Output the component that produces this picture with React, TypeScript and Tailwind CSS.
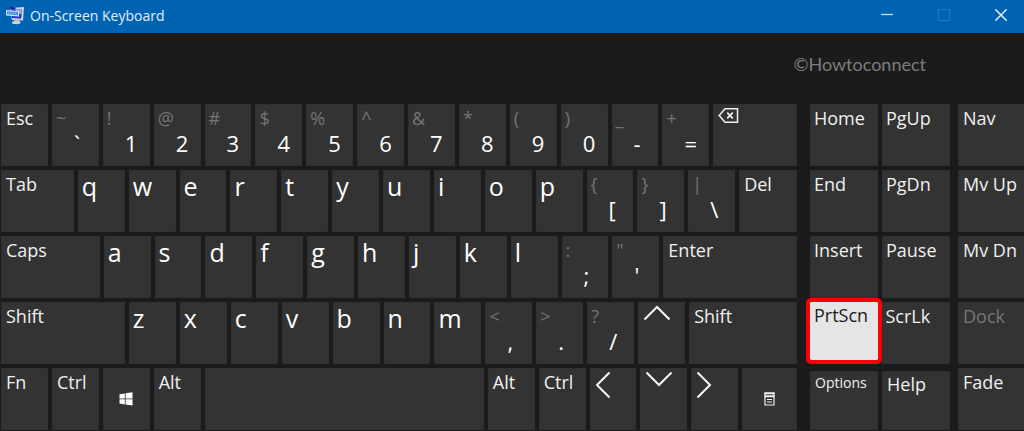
import React from "react";

type KeyDef = {
  id: string;
  label?: string;
  shifted?: string;
  size: string;
  kind?: "letter" | "word" | "pair" | "icon" | "center" | "blank";
  icon?: React.ReactNode;
};

const U = "flex-[47]";

const Backspace = (
  <svg width="22" height="18" viewBox="0 0 22 18" fill="none" stroke="#f0f0f0" strokeWidth="1.5">
    <path d="M7 1.7H19.5V15.3H7L1.2 8.5Z" />
    <path d="M9.2 5.7L14.8 11.3M14.8 5.7L9.2 11.3" strokeWidth="1.7" />
  </svg>
);

const Chevron = ({ d, w, h }: { d: string; w: number; h: number }) => (
  <svg width={w} height={h} viewBox={`0 0 ${w} ${h}`} fill="none" stroke="#f8f8f8" strokeWidth="2">
    <path d={d} />
  </svg>
);

const WindowsLogo = (
  <svg width="14" height="14" viewBox="0 0 14 14" fill="#ffffff">
    <path d="M0.5 2.2L5.8 1.4V6.5H0.5ZM6.6 1.3L13.5 0.3V6.5H6.6ZM0.5 7.3H5.8V12.4L0.5 11.6ZM6.6 7.3H13.5V13.5L6.6 12.5Z" />
  </svg>
);

const MenuIcon = (
  <svg width="11" height="14" viewBox="0 0 11 14" fill="none" stroke="#f0f0f0">
    <path d="M1 0.5V13H10V0.5" strokeWidth="1.2" />
    <path d="M0.5 1.2H10.5M0.5 4.2H10.5" strokeWidth="1.9" />
    <path d="M3 7.5H8M3 10H8" strokeWidth="1.2" />
  </svg>
);

const letters = (s: string): KeyDef[] =>
  s.split("").map((c) => ({ id: c, label: c, size: U, kind: "letter" as const }));

const pairs = (list: [string, string][]): KeyDef[] =>
  list.map(([shifted, label]) => ({ id: label, label, shifted, size: U, kind: "pair" as const }));

const word = (id: string, label: string, size: string = U): KeyDef => ({ id, label, size, kind: "word" });

const icon = (id: string, node: React.ReactNode, size: string = U, kind: KeyDef["kind"] = "icon"): KeyDef => ({
  id,
  icon: node,
  size,
  kind,
});

const rows: KeyDef[][] = [
  [
    word("Escape", "Esc"),
    ...pairs([
      ["~", "`"],
      ["!", "1"],
      ["@", "2"],
      ["#", "3"],
      ["$", "4"],
      ["%", "5"],
      ["^", "6"],
      ["&", "7"],
      ["*", "8"],
      ["(", "9"],
      [")", "0"],
      ["_", "-"],
      ["+", "="],
    ]),
    icon("Backspace", Backspace, "flex-[84]"),
  ],
  [
    word("Tab", "Tab", "flex-[73]"),
    ...letters("qwertyuiop"),
    ...pairs([
      ["{", "["],
      ["}", "]"],
      ["|", "\\"],
    ]),
    word("Delete", "Del", "flex-[58]"),
  ],
  [
    word("Caps Lock", "Caps", "flex-[99]"),
    ...letters("asdfghjkl"),
    ...pairs([
      [":", ";"],
      ['"', "'"],
    ]),
    word("Enter", "Enter", "flex-[134]"),
  ],
  [
    word("Left Shift", "Shift", "flex-[124]"),
    ...letters("zxcvbnm"),
    ...pairs([
      ["<", ","],
      [">", "."],
      ["?", "/"],
    ]),
    icon("Up", <Chevron w={28} h={16} d="M1.5 14.5L14 2L26.5 14.5" />),
    word("Right Shift", "Shift", "flex-[108]"),
  ],
  [
    word("Function", "Fn"),
    word("Left Control", "Ctrl"),
    icon("Windows", WindowsLogo, U, "center"),
    word("Left Alt", "Alt"),
    { id: "Space", size: "flex-[280]", kind: "blank" },
    word("Right Alt", "Alt"),
    word("Right Control", "Ctrl"),
    icon("Left", <Chevron w={16} h={28} d="M14.5 1.5L2 14L14.5 26.5" />),
    icon("Down", <Chevron w={28} h={16} d="M1.5 1.5L14 14L26.5 1.5" />),
    icon("Right", <Chevron w={16} h={28} d="M1.5 1.5L14 14L1.5 26.5" />),
    icon("Menu", MenuIcon, "flex-[55]", "center"),
  ],
];

const keyBase =
  "min-w-0 overflow-hidden whitespace-nowrap border border-[#2f2f2f] bg-[#333333] text-left text-[#f0f0f0]";

function Key({ k }: { k: KeyDef }) {
  const base = `${keyBase} w-full h-[62px] flex flex-col`;
  switch (k.kind) {
    case "letter":
      return (
        <button type="button" className={`${base} items-start pl-[3px] text-[25px] leading-[30px] text-white`}>
          {k.label}
        </button>
      );
    case "pair":
      return (
        <button type="button" className={`${base} items-start pl-[3px]`}>
          <span className="text-lg leading-[26px] text-[#757575]">{k.shifted}</span>
          <span className="pl-[18px] text-[22px] leading-6 text-white">{k.label}</span>
        </button>
      );
    case "icon":
      return (
        <button type="button" aria-label={k.id} className={`${base} items-start pl-1 pt-[2px]`}>
          {k.icon}
        </button>
      );
    case "center":
      return (
        <button type="button" aria-label={k.id} className={`${base} items-center justify-center`}>
          {k.icon}
        </button>
      );
    case "blank":
      return <button type="button" aria-label={k.id} className={base} />;
    default:
      return (
        <button type="button" aria-label={k.id} className={`${base} items-start pl-1 text-lg leading-[26px]`}>
          {k.label}
        </button>
      );
  }
}

const sideKey = `${keyBase} flex h-[62px] flex-1 items-start pl-[3px] text-lg leading-[26px]`;

function AppIcon() {
  return (
    <svg width="20" height="20" viewBox="0 0 20 20" aria-hidden="true">
      <path d="M5 2L19 1L18 14.5L7 14Z" fill="#d3d7e2" />
      <path d="M5 0.8L10.5 1.4V3L5 3.2Z" fill="#1a1fa0" />
      <path d="M6 2.8L17 3.6L16.2 12.8L7 12Z" fill="#2c38c4" />
      <path d="M10 3L16.8 3.6L16.4 8L13 8Z" fill="#93a6ec" />
      <path d="M1 4L14 5V10.4L1 9.4Z" fill="#cfe3fa" />
      <path d="M2 5.2L13 6.1V9.2L2 8.3Z" fill="#3f8cdd" />
      <path d="M3 6.8L12 7.6" stroke="#a9d0f7" strokeWidth="0.8" strokeDasharray="1.4 0.8" />
      <path d="M9.5 13.5H14.5L15 16.5H8.5Z" fill="#b3b5ba" />
      <ellipse cx="11.2" cy="16.6" rx="4.4" ry="1.7" fill="#d2d2cf" />
    </svg>
  );
}

export default function App() {
  return (
    <main className="min-h-screen overflow-hidden bg-[#1b1b1b] font-['Open_Sans','Noto_Sans',sans-serif]">
      <header className="flex h-[33px] items-start justify-between bg-[#0063b1]">
        <div className="flex h-[31px] items-center gap-[5px] pl-[5px]">
          <AppIcon />
          <h1 className="text-[14px] leading-5 text-[#e2eefa]">On-Screen Keyboard</h1>
        </div>
        <div className="flex h-[29px] gap-[11px]">
          <button type="button" aria-label="Minimize" className="flex w-[46px] items-center justify-center">
            <svg width="12" height="12" viewBox="0 0 12 12" stroke="#c8dff2" strokeWidth="1.3">
              <path d="M0 5.5H12" />
            </svg>
          </button>
          <button type="button" aria-label="Maximize" disabled className="flex w-[46px] items-center justify-center">
            <svg width="12" height="12" viewBox="0 0 12 12" fill="none" stroke="#1f7cc4">
              <path d="M0.5 0.5H11.5V11.5H0.5Z" />
            </svg>
          </button>
          <button type="button" aria-label="Close" className="flex w-[46px] items-center justify-center">
            <svg width="12" height="12" viewBox="0 0 12 12" stroke="#e6f0f9" strokeWidth="1.5">
              <path d="M0.3 0.3L11.7 11.7M11.7 0.3L0.3 11.7" />
            </svg>
          </button>
        </div>
      </header>

      <div className="flex h-[71px] justify-end pr-[98px] pt-[19px]">
        <p className="font-['Lato','Open_Sans',sans-serif] text-lg leading-6 text-[#7d7d7d]">©Howtoconnect</p>
      </div>

      <div className="flex pb-px pl-px">
        <section aria-label="Main keys" className="flex min-w-0 flex-[796] flex-col gap-1">
          {rows.map((row, i) => (
            <div key={i} className="flex gap-1">
              {row.map((k) => (
                <div key={k.id} className={`min-w-0 ${k.size}`}>
                  <Key k={k} />
                </div>
              ))}
            </div>
          ))}
        </section>

        <section aria-label="Navigation keys" className="ml-[13px] flex min-w-0 flex-[140] flex-col gap-1">
          {[
            ["Home", "PgUp"],
            ["End", "PgDn"],
            ["Insert", "Pause"],
          ].map((pair) => (
            <div key={pair[0]} className="flex gap-1">
              {pair.map((label) => (
                <button key={label} type="button" className={sideKey}>
                  {label}
                </button>
              ))}
            </div>
          ))}
          <div className="flex h-[62px] items-start gap-1">
            <button
              type="button"
              className="z-10 flex h-[58px] min-w-0 flex-1 items-start whitespace-nowrap rounded-[1px] bg-[#e5e5e5] pl-1 text-lg leading-[26px] text-[#1b1b1b] outline-4 outline-[#fb0007]"
            >
              PrtScn
            </button>
            <button type="button" className={sideKey}>
              ScrLk
            </button>
          </div>
          <div className="flex gap-1 pt-[3px]">
            <button
              type="button"
              className={`${keyBase} flex h-[59px] flex-1 items-start pl-1 text-[14px] leading-[22px]`}
            >
              Options
            </button>
            <button
              type="button"
              className={`${keyBase} flex h-[59px] flex-1 items-start pl-1 text-lg leading-6`}
            >
              Help
            </button>
          </div>
        </section>

        <section aria-label="Window keys" className="ml-2 flex min-w-0 flex-[66] flex-col gap-1">
          {["Nav", "Mv Up", "Mv Dn", "Dock", "Fade"].map((label) => (
            <button
              key={label}
              type="button"
              disabled={label === "Dock"}
              className={`${keyBase} flex h-[62px] items-start border-r-0 pl-1 text-lg leading-[26px] disabled:text-[#757575]`}
            >
              {label}
            </button>
          ))}
        </section>
      </div>
    </main>
  );
}
